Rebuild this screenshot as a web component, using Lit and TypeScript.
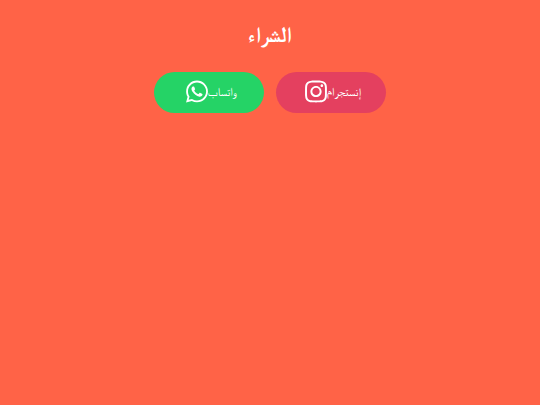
import { LitElement, html, css, svg } from "lit";
import { customElement } from "lit/decorators.js";

const instagramIcon = svg`<path d="M224.1 141c-63.6 0-114.9 51.3-114.9 114.9s51.3 114.9 114.9 114.9S339 319.5 339 255.9 287.7 141 224.1 141zm0 189.6c-41.1 0-74.7-33.5-74.7-74.7s33.5-74.7 74.7-74.7 74.7 33.5 74.7 74.7-33.6 74.7-74.7 74.7zm146.4-194.3c0 14.9-12 26.8-26.8 26.8-14.9 0-26.8-12-26.8-26.8s12-26.8 26.8-26.8 26.8 12 26.8 26.8zm76.1 27.2c-1.7-35.9-9.9-67.7-36.2-93.9-26.2-26.2-58-34.4-93.9-36.2-37-2.1-147.9-2.1-184.9 0-35.8 1.7-67.6 9.9-93.9 36.1s-34.4 58-36.2 93.9c-2.1 37-2.1 147.9 0 184.9 1.7 35.9 9.9 67.7 36.2 93.9s58 34.4 93.9 36.2c37 2.1 147.9 2.1 184.9 0 35.9-1.7 67.7-9.9 93.9-36.2 26.2-26.2 34.4-58 36.2-93.9 2.1-37 2.1-147.8 0-184.8zM398.8 388c-7.8 19.6-22.9 34.7-42.6 42.6-29.5 11.7-99.5 9-132.1 9s-102.7 2.6-132.1-9c-19.6-7.8-34.7-22.9-42.6-42.6-11.7-29.5-9-99.5-9-132.1s-2.6-102.7 9-132.1c7.8-19.6 22.9-34.7 42.6-42.6 29.5-11.7 99.5-9 132.1-9s102.7-2.6 132.1 9c19.6 7.8 34.7 22.9 42.6 42.6 11.7 29.5 9 99.5 9 132.1s2.7 102.7-9 132.1z"/>`;

const whatsappIcon = svg`<path d="M380.9 97.1C339 55.1 283.2 32 223.9 32c-122.4 0-222 99.6-222 222 0 39.1 10.2 77.3 29.6 111L0 480l117.7-30.9c32.4 17.7 68.9 27 106.1 27h.1c122.3 0 224.1-99.6 224.1-222 0-59.3-25.2-115-67.1-157zm-157 341.6c-33.2 0-65.7-8.9-94-25.7l-6.7-4-69.8 18.3L72 359.2l-4.4-7c-18.5-29.4-28.2-63.3-28.2-98.2 0-101.7 82.8-184.5 184.6-184.5 49.3 0 95.6 19.2 130.4 54.1 34.8 34.9 56.2 81.2 56.1 130.5 0 101.8-84.9 184.6-186.6 184.6zm101.2-138.2c-5.5-2.8-32.8-16.2-37.9-18-5.1-1.9-8.8-2.8-12.5 2.8-3.7 5.6-14.3 18-17.6 21.8-3.2 3.7-6.5 4.2-12 1.4-32.6-16.3-54-29.1-75.5-66-5.7-9.8 5.7-9.1 16.3-30.3 1.8-3.7.9-6.9-.5-9.7-1.4-2.8-12.5-30.1-17.1-41.2-4.5-10.8-9.1-9.3-12.5-9.5-3.2-.2-6.9-.2-10.6-.2-3.7 0-9.7 1.4-14.8 6.9-5.1 5.6-19.4 19-19.4 46.3 0 27.3 19.9 53.7 22.6 57.4 2.8 3.7 39.1 59.7 94.8 83.8 35.2 15.2 49 16.5 66.6 13.9 10.7-1.6 32.8-13.4 37.4-26.4 4.6-13 4.6-24.1 3.2-26.4-1.3-2.5-5-3.9-10.5-6.6z"/>`;

@customElement("app-root")
export class AppRoot extends LitElement {
  static styles = css`
    :host {
      display: block;
      box-sizing: border-box;
      min-height: 100vh;
      padding: 20px;
      background: #ff6347;
      color: #fff;
      font-family: "FreeSerif", "Liberation Sans", sans-serif;
      text-align: center;
    }
    .title {
      margin: 0 0 22px;
      font-size: 22px;
      line-height: 30px;
    }
    .links {
      display: flex;
      flex-wrap: wrap;
      justify-content: center;
      gap: 12px;
    }
    .link {
      display: flex;
      align-items: center;
      justify-content: center;
      box-sizing: border-box;
      width: 110px;
      min-height: 41px;
      padding-bottom: 2px;
      border-radius: 24px;
      color: #fff;
      font-size: 12px;
      line-height: 16px;
      text-decoration: none;
    }
    .whatsapp {
      background: #25d366;
    }
    .instagram {
      background: #e4405f;
    }
    .icon {
      width: 22px;
      height: 25px;
      margin-left: 4px;
      fill: currentColor;
    }
  `;

  render() {
    return html`
      <main lang="ar">
        <h1 class="title" dir="rtl">الشراء</h1>
        <nav class="links">
          <a class="link whatsapp" href="#whatsapp">
            <svg class="icon" viewBox="0 0 448 512" aria-hidden="true">${whatsappIcon}</svg>
            <span>واتساب</span>
          </a>
          <a class="link instagram" href="#instagram">
            <svg class="icon" viewBox="0 0 448 512" aria-hidden="true">${instagramIcon}</svg>
            <span>إنستجرام</span>
          </a>
        </nav>
      </main>
    `;
  }
}
